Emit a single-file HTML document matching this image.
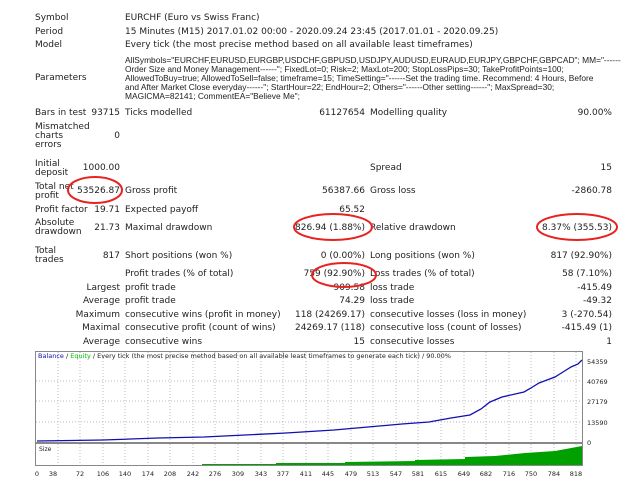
<!DOCTYPE html>
<html><head><meta charset="utf-8"><style>
body{margin:0;width:640px;height:480px;background:#fff;position:relative;overflow:hidden;font-family:"DejaVu Sans","Liberation Sans",sans-serif;font-size:9px;color:#222}
.t{position:absolute;white-space:nowrap;line-height:9px}
.r{text-align:right}
</style></head><body>
<div class="t" style="left:35px;top:14px">Symbol</div>
<div class="t" style="left:125px;top:14px">EURCHF (Euro vs Swiss Franc)</div>
<div class="t" style="left:35px;top:28px">Period</div>
<div class="t" style="left:125px;top:28px">15 Minutes (M15) 2017.01.02 00:00 - 2020.09.24 23:45 (2017.01.01 - 2020.09.25)</div>
<div class="t" style="left:35px;top:41px">Model</div>
<div class="t" style="left:125px;top:41px">Every tick (the most precise method based on all available least timeframes)</div>
<div class="t" style="left:35px;top:74px">Parameters</div>
<div class="t" style="left:125px;top:56px;font-family:'Liberation Sans',sans-serif;font-size:8.4px;line-height:9px">AllSymbols="EURCHF,EURUSD,EURGBP,USDCHF,GBPUSD,USDJPY,AUDUSD,EURAUD,EURJPY,GBPCHF,GBPCAD"; MM="------<br>Order Size and Money Management------"; FixedLot=0; Risk=2; MaxLot=200; StopLossPips=30; TakeProfitPoints=100;<br>AllowedToBuy=true; AllowedToSell=false; timeframe=15; TimeSetting="------Set the trading time. Recommend: 4 Hours, Before<br>and After Market Close everyday------"; StartHour=22; EndHour=2; Others="------Other setting------"; MaxSpread=30;<br>MAGICMA=82141; CommentEA="Believe Me";</div>

<div class="t" style="left:35px;top:109px">Bars in test</div>
<div class="t r" style="right:520px;top:109px">93715</div>
<div class="t" style="left:125px;top:109px">Ticks modelled</div>
<div class="t r" style="right:275px;top:109px">61127654</div>
<div class="t" style="left:370px;top:109px">Modelling quality</div>
<div class="t r" style="right:28px;top:109px">90.00%</div>

<div class="t" style="left:35px;top:123px">Mismatched<br>charts<br>errors</div>
<div class="t r" style="right:520px;top:132px">0</div>

<div class="t" style="left:35px;top:160px">Initial<br>deposit</div>
<div class="t r" style="right:520px;top:164px">1000.00</div>
<div class="t" style="left:370px;top:164px">Spread</div>
<div class="t r" style="right:28px;top:164px">15</div>

<div class="t" style="left:35px;top:183px">Total net<br>profit</div>
<div class="t r" style="right:520px;top:187px;background:#fff">53526.87</div>
<div class="t" style="left:125px;top:187px">Gross profit</div>
<div class="t r" style="right:275px;top:187px">56387.66</div>
<div class="t" style="left:370px;top:187px">Gross loss</div>
<div class="t r" style="right:28px;top:187px">-2860.78</div>

<div class="t" style="left:35px;top:206px">Profit factor</div>
<div class="t r" style="right:520px;top:206px">19.71</div>
<div class="t" style="left:125px;top:206px">Expected payoff</div>
<div class="t r" style="right:275px;top:206px">65.52</div>

<div class="t" style="left:35px;top:219px">Absolute<br>drawdown</div>
<div class="t r" style="right:520px;top:224px">21.73</div>
<div class="t" style="left:125px;top:224px">Maximal drawdown</div>
<div class="t r" style="right:275px;top:224px">826.94 (1.88%)</div>
<div class="t" style="left:370px;top:224px">Relative drawdown</div>
<div class="t r" style="right:28px;top:224px">8.37% (355.53)</div>

<div class="t" style="left:35px;top:247px">Total<br>trades</div>
<div class="t r" style="right:520px;top:252px">817</div>
<div class="t" style="left:125px;top:252px">Short positions (won %)</div>
<div class="t r" style="right:275px;top:252px">0 (0.00%)</div>
<div class="t" style="left:370px;top:252px">Long positions (won %)</div>
<div class="t r" style="right:28px;top:252px">817 (92.90%)</div>

<div class="t" style="left:125px;top:270px">Profit trades (% of total)</div>
<div class="t r" style="right:275px;top:270px">759 (92.90%)</div>
<div class="t" style="left:370px;top:270px">Loss trades (% of total)</div>
<div class="t r" style="right:28px;top:270px">58 (7.10%)</div>

<div class="t r" style="right:520px;top:284px">Largest</div>
<div class="t" style="left:125px;top:284px">profit trade</div>
<div class="t r" style="right:275px;top:284px">909.58</div>
<div class="t" style="left:370px;top:284px">loss trade</div>
<div class="t r" style="right:28px;top:284px">-415.49</div>

<div class="t r" style="right:520px;top:297px">Average</div>
<div class="t" style="left:125px;top:297px">profit trade</div>
<div class="t r" style="right:275px;top:297px">74.29</div>
<div class="t" style="left:370px;top:297px">loss trade</div>
<div class="t r" style="right:28px;top:297px">-49.32</div>

<div class="t r" style="right:520px;top:311px">Maximum</div>
<div class="t" style="left:125px;top:311px">consecutive wins (profit in money)</div>
<div class="t r" style="right:275px;top:311px">118 (24269.17)</div>
<div class="t" style="left:370px;top:311px">consecutive losses (loss in money)</div>
<div class="t r" style="right:28px;top:311px">3 (-270.54)</div>

<div class="t r" style="right:520px;top:324px">Maximal</div>
<div class="t" style="left:125px;top:324px">consecutive profit (count of wins)</div>
<div class="t r" style="right:275px;top:324px">24269.17 (118)</div>
<div class="t" style="left:370px;top:324px">consecutive loss (count of losses)</div>
<div class="t r" style="right:28px;top:324px">-415.49 (1)</div>

<div class="t r" style="right:520px;top:338px">Average</div>
<div class="t" style="left:125px;top:338px">consecutive wins</div>
<div class="t r" style="right:275px;top:338px">15</div>
<div class="t" style="left:370px;top:338px">consecutive losses</div>
<div class="t r" style="right:28px;top:338px">1</div>

<svg width="640" height="480" style="position:absolute;left:0;top:0" font-family="DejaVu Sans,Liberation Sans,sans-serif">
<g fill="none" stroke="#e8231f" stroke-width="2">
<ellipse cx="95" cy="190" rx="27" ry="13"/>
<ellipse cx="333" cy="227" rx="39" ry="13"/>
<ellipse cx="577" cy="227" rx="40" ry="13"/>
<ellipse cx="344" cy="275" rx="32" ry="12"/>
</g>
<rect x="35.5" y="351.5" width="547" height="91" fill="#fff" stroke="#888"/>
<rect x="35.5" y="443.5" width="547" height="22" fill="#fff" stroke="#888"/>
<g stroke="#bbb" stroke-dasharray="1,2">
<path d="M58 352V442M80 352V442M103 352V442M125 352V442M148 352V442M170 352V442M193 352V442M215 352V442M238 352V442M261 352V442M283 352V442M306 352V442M328 352V442M351 352V442M373 352V442M396 352V442M418 352V442M441 352V442M464 352V442M486 352V442M509 352V442M531 352V442M554 352V442M576 352V442"/>
<path d="M58 444V465M80 444V465M103 444V465M125 444V465M148 444V465M170 444V465M193 444V465M215 444V465M238 444V465M261 444V465M283 444V465M306 444V465M328 444V465M351 444V465M373 444V465M396 444V465M418 444V465M441 444V465M464 444V465M486 444V465M509 444V465M531 444V465M554 444V465M576 444V465"/>
<path d="M36 381H582M36 401H582M36 422H582"/>
</g>
<path d="M202 465V464L276 464V463L345 463V462L415 461V460L465 459V457L495 456L525 453L555 451L582 446V465Z" fill="#00a000"/>
<polyline fill="none" stroke="#1010b0" stroke-width="1.3" points="37,441 103,440 158,438 204,437 245,435 286,433 334,430 368,427 402,424 429,422 451,418 470,415 481,409 490,402 502,397 524,392 531,388 539,383 555,377 563,372 571,367 578,364 582,360"/>
<text x="38" y="358" font-size="6.5" fill="#222"><tspan fill="#1010b0">Balance</tspan> / <tspan fill="#00c000">Equity</tspan> / Every tick (the most precise method based on all available least timeframes to generate each tick) / 90.00%</text>
<text x="39" y="451" font-size="6" fill="#222">Size</text>
<g font-size="6.5" fill="#222">
<text x="587" y="364">54359</text><text x="587" y="384">40769</text><text x="587" y="404">27179</text><text x="587" y="425">13590</text><text x="587" y="445">0</text>
</g>
<g font-size="6.5" fill="#222" text-anchor="middle">
<text x="37" y="476">0</text><text x="53" y="476">38</text><text x="80" y="476">72</text><text x="103" y="476">106</text><text x="125" y="476">140</text><text x="148" y="476">174</text><text x="170" y="476">208</text><text x="193" y="476">242</text><text x="215" y="476">276</text><text x="238" y="476">309</text><text x="261" y="476">343</text><text x="283" y="476">377</text><text x="306" y="476">411</text><text x="328" y="476">445</text><text x="351" y="476">479</text><text x="373" y="476">513</text><text x="396" y="476">547</text><text x="418" y="476">581</text><text x="441" y="476">615</text><text x="464" y="476">649</text><text x="486" y="476">682</text><text x="509" y="476">716</text><text x="531" y="476">750</text><text x="554" y="476">784</text><text x="576" y="476">818</text>
</g>
</svg>
</body></html>
